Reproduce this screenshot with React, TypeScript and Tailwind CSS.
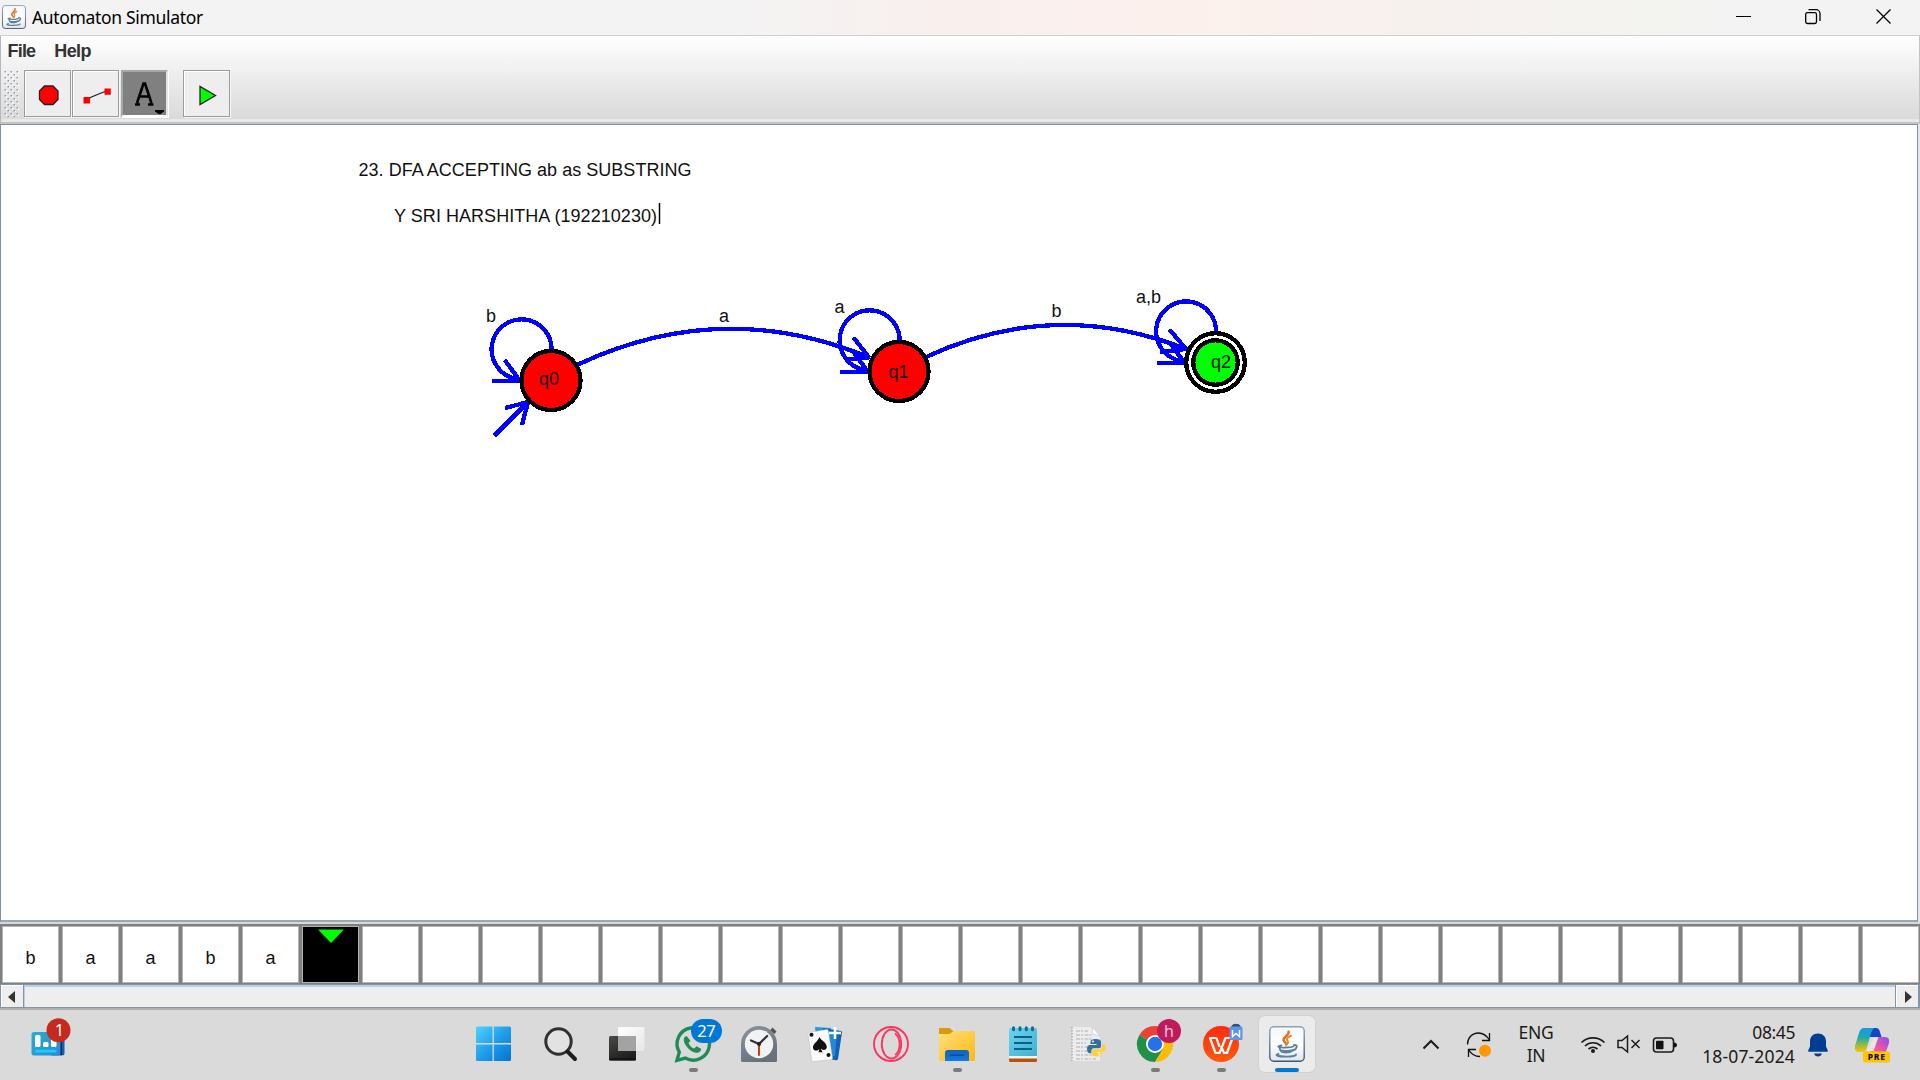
import type { ReactNode } from "react";

const SANS = "font-['Liberation_Sans',Arial,sans-serif]";
const UI = "font-['Noto_Sans','Open_Sans',sans-serif]";

function JavaCup() {
  return (
    <svg viewBox="0 0 36 36" className="size-full">
      <defs>
        <linearGradient id="javaBg" x1="0" y1="0" x2="0" y2="1">
          <stop offset="0" stopColor="#f4f7fa" />
          <stop offset="0.5" stopColor="#ffffff" />
          <stop offset="1" stopColor="#dfe6ee" />
        </linearGradient>
        <linearGradient id="javaEdge" x1="0" y1="0" x2="0" y2="1">
          <stop offset="0" stopColor="#8fa3b5" />
          <stop offset="1" stopColor="#41576e" />
        </linearGradient>
      </defs>
      <rect x="0.8" y="0.8" width="34.4" height="34.4" rx="4" fill="url(#javaBg)" stroke="url(#javaEdge)" strokeWidth="1.4" />
      <g fill="none" strokeLinecap="round">
        <path d="M19.500 5.500c1.500 4-5.500 5.500-5 8.500.3 2 3 2.500 2.500 4.500" stroke="#e0701e" strokeWidth="2.400" />
        <path d="M22 9.800c-3.500 1.500-5 3-3.500 5 1 1.500.8 2.200-.7 3.700" stroke="#e8862e" strokeWidth="2" />
        <path d="M12.500 19.500c-6 1-3 2.200 4.500 2 3.500 0 6-.4 7.500-1" stroke="#5b7f9f" strokeWidth="1.800" />
        <path d="M10.500 21.500c1 5 2.500 5 6 5s6-.5 7-2.500" stroke="#5b7f9f" strokeWidth="1.800" />
        <path d="M25 19c4.500-.5 3 4-1 5.500" stroke="#5b7f9f" strokeWidth="1.900" />
        <path d="M13 24.500c3 .8 6 .7 9 0M9.500 28c-5 1.200 0 2.600 8 2.600 6 0 10-.9 9.500-2.200" stroke="#5b7f9f" strokeWidth="1.900" />
      </g>
    </svg>
  );
}

function TitleBar() {
  return (
    <header className="flex h-[36px] items-center border-b border-[#cfcfcf] bg-[linear-gradient(90deg,#f3f3f3_0%,#f3f3f3_38%,#f9efed_50%,#fbf0ec_62%,#f6f1ee_76%,#f3f3ef_86%,#f3f3f3_90%)] pl-[2px]">
      <div className="mt-[-2px] size-[24px]">
        <JavaCup />
      </div>
      <h1 className={`${UI} ml-[6px] mt-[-1.500px] text-[17.500px] leading-[24px] tracking-[-0.330px] text-black`}>Automaton Simulator</h1>
      <div className="ml-auto flex h-full">
        <svg className="h-[35px] w-[69px]" viewBox="0 0 69 35">
          <path d="M27 16.500h15" stroke="#000" strokeWidth="1" />
        </svg>
        <svg className="h-[35px] w-[69px]" viewBox="0 0 69 35" fill="none" stroke="#000" strokeWidth="1.300">
          <rect x="27.700" y="12.700" width="10.800" height="10.800" rx="1.800" />
          <path d="M30.500 9.700h7.500a4 4 0 0 1 4 4v7.300" />
        </svg>
        <svg className="h-[35px] w-[73px]" viewBox="0 0 73 35">
          <path d="M29.500 9.500l14 14m0-14l-14 14" stroke="#000" strokeWidth="1.300" />
        </svg>
      </div>
    </header>
  );
}

function ToolButton({ children, active }: { children: ReactNode; active?: boolean }) {
  return (
    <button
      className={
        active
          ? "h-[47px] w-[47px] border-2 border-b-white border-l-[#a8a8a8] border-r-[#e4e4e4] border-t-[#a8a8a8] bg-[#808080] shadow-[1px_1px_0_#fff]"
          : "h-[47px] w-[47px] border border-[#9c9c9c] bg-[#eee] shadow-[1px_1px_0_#f6f6f6,inset_1px_1px_0_#fff]"
      }
    >
      {children}
    </button>
  );
}

function MenuAndTools() {
  return (
    <div className="flex h-[88px] flex-col border-b-2 border-l border-r border-b-[#c4c4c4] border-l-[#b8b8b8] border-r-[#c4c4c4] bg-[linear-gradient(180deg,#ffffff_0%,#f4f4f4_28%,#dadada_96%,#e8e8e8_97%)]">
      <nav className={`${SANS} flex h-[34px] items-center gap-[19px] pb-[1px] pl-[6.500px] text-[18px] font-bold text-[#333]`}>
        <span className="tracking-[-0.800px]">File</span>
        <span className="tracking-[-0.600px]">Help</span>
      </nav>
      <div className="flex pl-[3px] pt-[2px]">
        <svg className="h-[47px] w-[15px]">
          <defs>
            <pattern id="grip" width="6" height="6" patternUnits="userSpaceOnUse">
              <rect width="1.500" height="1.500" x="0.500" y="1" fill="#8d9bab" />
              <rect width="1.500" height="1.500" x="1.800" y="2.300" fill="#fff" />
              <rect width="1.500" height="1.500" x="3.500" y="4" fill="#8d9bab" />
              <rect width="1" height="1" x="5" y="5" fill="#fff" />
            </pattern>
          </defs>
          <rect width="15" height="47" fill="url(#grip)" />
        </svg>
        <div className="ml-[5px] flex gap-[1px]">
          <ToolButton>
            <svg viewBox="0 0 45 45" className="size-[45px]">
              <path d="M19.500 15h8.500l5 5v8.500l-5 5h-8.500l-5-5V20z" fill="#f00" stroke="#222" strokeWidth="1.300" />
            </svg>
          </ToolButton>
          <ToolButton>
            <svg viewBox="0 0 45 45" className="size-[45px]">
              <path d="M13.500 29l5-3 6-2.500 10-4" stroke="#222" strokeWidth="1.300" fill="none" />
              <path d="M10.500 26h6.500v6.500h-6.500zM31.500 17.500h6.300v6.300h-6.300z" fill="#f00" />
            </svg>
          </ToolButton>
          <div className="pl-[1px]">
            <ToolButton active>
              <svg viewBox="0 0 43 43" className="size-[43px]">
                <path d="M12 32.500h5M25 32.500h5.500M14.500 32.500v-3l6-18h1.500l6 18v3M17 24.500h9" fill="none" stroke="#000" strokeWidth="2.600" />
                <path d="M32 38h9v1.500l-3.500 2.500h-2l-3.500-2.500z" fill="#000" />
              </svg>
            </ToolButton>
          </div>
        </div>
        <div className="ml-[15px]">
          <ToolButton>
            <svg viewBox="0 0 45 45" className="size-[45px]">
              <path d="M16 15.500v18l15.500-9z" fill="#0f0" stroke="#222" strokeWidth="1.300" />
            </svg>
          </ToolButton>
        </div>
      </div>
    </div>
  );
}

function Loop({ x, y }: { x: number; y: number }) {
  return (
    <g transform={`translate(${x} ${y})`}>
      <path d="M0.500-28A30 30 0 1 0-34-1L-30 0.500" />
      <path d="M-59 0.800h28l-15.500-21" strokeLinejoin="bevel" />
    </g>
  );
}

/* Drawing area: the automaton graph and its two notes. */
function Canvas() {
  return (
    <main className="h-[798px] bg-[#e4e8ec] pr-[2px]">
      <div className="h-full border border-b-2 border-[#7f91a3] border-b-[#9aa8b6] bg-white">
        <svg viewBox="1 125 1916 795" className={`block h-[795px] w-[1916px] ${SANS}`} fontSize="18" fill="#111">
          <text x="358.500" y="176" textLength="333" lengthAdjust="spacing">23. DFA ACCEPTING ab as SUBSTRING</text>
          <text x="394" y="222" textLength="263" lengthAdjust="spacing">Y SRI HARSHITHA (192210230)</text>
          <path d="M659.500 203v21" stroke="#000" strokeWidth="1.500" />
          <g fill="none" stroke="#00f" strokeWidth="4.300" shapeRendering="crispEdges">
            <path d="M578 364.500Q722 297 868 357" />
            <path d="M845 360l24-2.500-15.500-20" strokeLinejoin="bevel" />
            <path d="M925 357.500Q1054 297 1186 349" />
            <path d="M1160 352l26-3-16.500-19.500" strokeLinejoin="bevel" />
            <Loop x={551} y={380} />
            <Loop x={899} y={371} />
            <Loop x={1215.500} y={362} />
            <path d="M494 436l34-34M505 408l23-6-6 23" />
          </g>
          <g stroke="#000" strokeWidth="4.300" shapeRendering="crispEdges">
            <circle cx="551" cy="380.500" r="29.500" fill="#f00" />
            <circle cx="899" cy="371.500" r="29.500" fill="#f00" />
            <circle cx="1215.500" cy="362.500" r="29.300" fill="#fff" />
            <circle cx="1215.500" cy="362.500" r="22.200" fill="#0f0" />
          </g>
          <text x="539" y="385">q0</text>
          <text x="888.500" y="378">q1</text>
          <text x="1211" y="368">q2</text>
          <text x="486" y="321.500">b</text>
          <text x="719" y="321.500">a</text>
          <text x="834.500" y="312.500">a</text>
          <text x="1051.500" y="316.500">b</text>
          <text x="1136" y="303">a,b</text>
        </svg>
      </div>
    </main>
  );
}

const tape = ["b", "a", "a", "b", "a"];

function Tape() {
  return (
    <section className="h-[62px] overflow-hidden border-t-2 border-[#d8d8d8] bg-[#808080] pl-[2px] pt-[2px]">
      <div className="flex w-[1980px] gap-[3px]">
        {Array.from({ length: 32 }, (_, i) => (
          <div
            key={i}
            className={`${SANS} flex h-[57px] w-[57px] justify-center border border-[#b4b4b4] pt-[17px] text-[18px] leading-[28px] text-[#111] ${i === 5 ? "bg-black" : "bg-white"}`}
          >
            {i === 5 ? (
              <svg className="mt-[-15px] h-[15px] w-[26px]" viewBox="0 0 26 15">
                <path d="M0 0.500h26L13 14z" fill="#0f0" />
              </svg>
            ) : (
              tape[i]
            )}
          </div>
        ))}
      </div>
    </section>
  );
}

function ScrollBar() {
  return (
    <div className="flex h-[26px] border-b-2 border-t border-b-[#b0b0b0] border-t-[#8395a7] bg-[#8395a7] pl-[1px]">
      <div className="flex h-[22px] w-[22px] items-center border-l border-t border-white bg-[#eee]">
        <svg className="ml-[6px] h-[12px] w-[7px]" viewBox="0 0 7 12"><path d="M7 0v12L0 6z" fill="#333" /></svg>
      </div>
      <div className="ml-[1px] h-[22px] flex-1 border-l border-t-2 border-[#b8cfe5] bg-[#eee]" />
      <div className="ml-[1px] mr-[2px] flex h-[22px] w-[22px] items-center border-l border-t border-white bg-[#eee]">
        <svg className="ml-[8px] h-[12px] w-[7px]" viewBox="0 0 7 12"><path d="M0 0v12L7 6z" fill="#333" /></svg>
      </div>
    </div>
  );
}

function TaskIcon({ children, running, active }: { children: ReactNode; running?: boolean; active?: boolean }) {
  return (
    <div className="flex h-[70px] w-[66px] justify-center pt-[6px]">
      <div className={`flex h-[56px] w-[56px] flex-col items-center rounded-[6px] pt-[10px] ${active ? "bg-[#ebebeb] shadow-[0_0_0_1px_#d2d2d2]" : ""}`}>
        <div className="size-[36px]">{children}</div>
        {running && <div className="mt-[6px] h-[5px] w-[9px] rounded-full bg-[#7b7b7b]" />}
        {active && <div className="mt-[6px] h-[5px] w-[24px] rounded-full bg-[#0078d7]" />}
      </div>
    </div>
  );
}

function Pic({ children }: { children: ReactNode }) {
  return <svg viewBox="0 0 36 36" className="size-[36px] overflow-visible">{children}</svg>;
}

function Taskbar() {
  return (
    <footer className={`${UI} flex h-[70px] bg-[#dadada] text-[#1b1b1b]`}>
      <svg className="h-[70px] w-[462px] overflow-visible" viewBox="0 0 462 70">
        <defs>
          <linearGradient id="wid" x1="0" x2="1" y1="0" y2="1">
            <stop offset="0" stopColor="#25b0cb" />
            <stop offset="1" stopColor="#2f86dc" />
          </linearGradient>
        </defs>
        <rect x="50" y="22" width="14.500" height="23.500" rx="2.500" fill="#1560b0" />
        <path d="M60 28h2v17h-2z" fill="#0b2a58" />
        <rect x="31.500" y="22" width="29" height="23.500" rx="2.500" fill="url(#wid)" />
        <g fill="#fff">
          <rect x="35" y="25" width="5.500" height="12" rx="1.500" />
          <rect x="43" y="32" width="5.500" height="5" rx="1.500" />
          <rect x="51" y="25" width="5.500" height="12" rx="1.500" />
        </g>
        <rect x="35" y="39.800" width="21.500" height="2.800" rx="1.400" fill="#11d3f5" />
        <circle cx="58.500" cy="20.300" r="12" fill="#c42b1c" />
        <text x="59.500" y="26.200" fontSize="16.500" textAnchor="middle" fill="#fff">1</text>
      </svg>

      <div className="flex">
        <TaskIcon>
          <Pic>
            <defs>
              <linearGradient id="win" gradientUnits="userSpaceOnUse" x1="0" y1="0" x2="36" y2="36">
                <stop offset="0" stopColor="#4cd4ff" />
                <stop offset="0.500" stopColor="#1f9be8" />
                <stop offset="1" stopColor="#0070d2" />
              </linearGradient>
            </defs>
            <path d="M0 0.500h15.500v16.500H-1V1.500Q-1 .5 0 .5zM16.800 .5h15.700q1.500 0 1.500 1.500v15H16.800zM-1 18.500h16.500v16.500H0Q-1 35 -1 34zM16.800 18.500H34v15q0 1.500-1.500 1.500H16.800z" fill="url(#win)" />
          </Pic>
        </TaskIcon>
        <TaskIcon>
          <Pic>
            <circle cx="15.500" cy="15.500" r="12.700" fill="#e2e2e2" stroke="#303030" strokeWidth="3" />
            <path d="M24.500 25.500l7.500 7.500" stroke="#1d1d1d" strokeWidth="4" strokeLinecap="round" />
          </Pic>
        </TaskIcon>
        <TaskIcon>
          <Pic>
            <defs>
              <linearGradient id="tvb" x1="0" x2="0.500" y1="0" y2="1"><stop offset="0" stopColor="#4a4a48" /><stop offset="1" stopColor="#1e1e1e" /></linearGradient>
              <linearGradient id="tvw" x1="0" x2="1" y1="0" y2="1"><stop offset="0" stopColor="#fff" /><stop offset="1" stopColor="#e6e6e6" /></linearGradient>
            </defs>
            <rect x="0" y="10" width="27" height="24.800" rx="1.500" fill="url(#tvb)" />
            <rect x="9" y="1" width="26.500" height="24" rx="1.500" fill="url(#tvw)" />
            <path d="M9 10h18v15H10.500q-1.500 0-1.500-1.500z" fill="#a3a3a3" />
            <path d="M.3 33h26.500" stroke="#000" strokeWidth="0.800" />
          </Pic>
        </TaskIcon>
        <TaskIcon running>
          <Pic>
            <path d="M2 34.300l2.300-8.200A16.200 16.200 0 1 1 10.300 32z" fill="none" stroke="#1f8b57" strokeWidth="3.400" />
            <path d="M12 10.500c-1.500-1-3.500 1-3.200 4 .5 5 7.500 12.500 13 12.300 2.500 0 4.500-2 4.300-4l-4.500-2.500-2.500 2.300c-2.500-1-4.500-3-5.600-5.600l2-2.300z" fill="#1f8b57" />
            <rect x="16" y="-7" width="31" height="24" rx="12" fill="#0078d7" />
            <text x="31.300" y="11" fontSize="16.500" textAnchor="middle" letterSpacing="-0.500" fill="#fff">27</text>
          </Pic>
        </TaskIcon>
        <TaskIcon>
          <Pic>
            <defs>
              <linearGradient id="clk" x1="0" x2="0.500" y1="0" y2="1"><stop offset="0" stopColor="#8c959e" /><stop offset="1" stopColor="#66717c" /></linearGradient>
            </defs>
            <path d="M29 4.500l2.500-3 4 4-2 2.500z" fill="#555" />
            <path d="M0 18a18 18 0 0 1 36 0v16.500q0 1.500-1.500 1.500h-33Q0 36 0 34.500z" fill="url(#clk)" />
            <circle cx="18" cy="18" r="14.200" fill="#f1f2f3" />
            <path d="M10 14.500l8 3.500 8.200-8" fill="none" stroke="#333" strokeWidth="2.200" strokeLinecap="round" />
            <path d="M18 18v11.800" stroke="#d83b01" strokeWidth="2" />
            <circle cx="18" cy="18" r="2" fill="#222" />
          </Pic>
        </TaskIcon>
        <TaskIcon>
          <Pic>
            <path d="M8 1l16 1-3 30-10-1z" fill="#1b9be5" />
            <path d="M16 2l18 3q1.300.300 1 1.500L31 33q-.3 1.500-2 1.300L15 32z" fill="#0f62b4" />
            <path d="M20 5l10 1-2 24-8 1z" fill="#2587d8" />
            <path d="M2 6.500L19.500 3.500q1.500-.3 1.800 1.200L25.500 32q.2 1.500-1.300 1.700L6.500 35.500q-1.500.2-1.800-1.300L1 8q-.2-1.300 1-1.500z" fill="#fafafa" stroke="#bbb" strokeWidth="0.500" />
            <path d="M12.300 11c2 4 7 5 7.500 9.500.3 3.500-3.800 4.500-6 2l1.700 3.800h-4l1-3.600c-1.800 3-6.200 2.300-6.500-1-.4-4 5-6 6.300-10.700z" fill="#111" />
            <circle cx="4.500" cy="8.800" r="2" fill="#111" />
            <circle cx="21.500" cy="29" r="2" fill="#111" />
            <path d="M28 1v12M22 7h12" stroke="#fff" strokeWidth="2.500" />
          </Pic>
        </TaskIcon>
        <TaskIcon>
          <Pic>
            <g fill="none" stroke="#fb3660">
              <circle cx="18" cy="18" r="17" strokeWidth="1.900" />
              <ellipse cx="18.500" cy="18" rx="9.700" ry="14.500" strokeWidth="1.900" />
              <path d="M22 7.500c6 4 6 17.500 0 21.500" strokeWidth="1.700" />
            </g>
          </Pic>
        </TaskIcon>
        <TaskIcon running>
          <Pic>
            <defs>
              <linearGradient id="fld" x1="0" x2="1" y1="0" y2="1"><stop offset="0" stopColor="#ffe07a" /><stop offset="1" stopColor="#fdb913" /></linearGradient>
              <linearGradient id="fldb" x1="0" x2="0" y1="0" y2="1"><stop offset="0" stopColor="#0a66c2" /><stop offset="1" stopColor="#1679dc" /></linearGradient>
            </defs>
            <path d="M0 3q0-1 1-1h9.500l4 3.300L11 8.500H0z" fill="#dc9a06" />
            <path d="M0 8h10.500l4-3H35q1 0 1 1v28q0 1-1 1H1q-1 0-1-1z" fill="url(#fld)" />
            <path d="M6 35v-8q0-3 3-3h18q3 0 3 3v8z" fill="url(#fldb)" />
            <path d="M11 29.200h14" stroke="#0a4a92" strokeWidth="1.500" />
          </Pic>
        </TaskIcon>
        <TaskIcon>
          <Pic>
            <defs>
              <linearGradient id="ntp" x1="0" x2="1" y1="0" y2="1"><stop offset="0" stopColor="#6cd4ee" /><stop offset="1" stopColor="#3fb0d3" /></linearGradient>
            </defs>
            <path d="M4 30h28v3H4z" fill="#f4f4f4" />
            <path d="M4 32.500h28v2.300q0 1.200-1.500 1.200h-25Q4 36 4 34.800z" fill="#b5530c" />
            <path d="M4 3.500Q4 2 5.500 2h25Q32 2 32 3.500V30H4z" fill="url(#ntp)" />
            <path d="M9 11h18M9 17h18M9 23h18" stroke="#0b5f85" strokeWidth="2" />
            <path d="M8.500 1.700v2M15 1.700v2M21.300 1.700v2M27.500 1.700v2" stroke="#0b6d91" strokeWidth="3" strokeLinecap="round" />
          </Pic>
        </TaskIcon>
        <TaskIcon>
          <Pic>
            <path d="M1 1h20l8 9v25H1z" fill="#ececec" />
            <path d="M1 1v34" stroke="#aaa" strokeWidth="1.500" strokeDasharray="1.500 1.500" />
            <path d="M5 5h12M5 9h16M5 13h17M5 17h10M5 21h14M5 25h11M5 29h16M5 33h20" stroke="#c4c4c4" strokeWidth="1.300" strokeDasharray="4 1 2 1.500" />
            <path d="M21 1l8 9-7-2z" fill="#fff" stroke="#bbb" strokeWidth="0.500" />
            <path d="M24.500 13q-5 0-5 3v2h6v1H19q-3 0-3 4t2.500 4.200h2v-2.500q0-2.500 2.500-2.500h5q2 0 2-2.200v-4q0-3-5.500-3z" fill="#34709f" />
            <path d="M26 30.500q-5.500 0-5.500-2.500v-2.500q0-2.200 2.200-2.200h5.800q2.500 0 2.500-2.300v-3h1q2.500 0 2.500 3.700t-3 4.300h-5.500v1h5V28q0 2.500-5 2.500z" fill="#ffd03b" />
            <circle cx="22" cy="15.500" r="0.900" fill="#fff" />
            <circle cx="28.500" cy="28.500" r="0.900" fill="#fff" />
          </Pic>
        </TaskIcon>
        <TaskIcon running>
          <Pic>
            <path d="M18 18L2.400 9A18 18 0 0 1 33.600 9z" fill="#ea4335" />
            <path d="M18 18L2.400 9A18 18 0 0 0 18 36l8-13z" fill="#1f9148" />
            <path d="M18 9h15.600A18 18 0 0 1 18 36l8-13z" fill="#fbbc05" />
            <circle cx="18" cy="18" r="9" fill="#fff" />
            <circle cx="18" cy="18" r="7.200" fill="#2572e6" />
            <circle cx="32" cy="5" r="12" fill="#bf1a5c" />
            <text x="32" y="11" fontSize="16" textAnchor="middle" fill="#f3c6d8">h</text>
          </Pic>
        </TaskIcon>
        <TaskIcon running>
          <Pic>
            <defs>
              <linearGradient id="wps" x1="0" x2="0" y1="0" y2="1"><stop offset="0" stopColor="#fc2a12" /><stop offset="1" stopColor="#ff5a0a" /></linearGradient>
            </defs>
            <circle cx="18" cy="18" r="18" fill="url(#wps)" />
            <path d="M13.500 12H7l5.500 15h4l6-15h7l-5.500 15h-3L18 20M13.500 12l3 9" fill="none" stroke="#fff" strokeWidth="2.200" strokeLinejoin="round" />
            <path d="M28 1q2-4 6-3 4 0 4 5z" fill="#34506e" />
            <rect x="26.500" y="0.500" width="13" height="13.500" rx="1.500" fill="#5b94ee" />
            <path d="M29.500 4v6.500l3.500-3 3.500 3V4" fill="none" stroke="#fff" strokeWidth="1.500" />
          </Pic>
        </TaskIcon>
        <TaskIcon active>
          <JavaCup />
        </TaskIcon>
      </div>

      <div className="ml-auto flex w-[510px] items-center">
        <svg className="ml-[12px] h-[12px] w-[18px]" viewBox="0 0 18 12">
          <path d="M1.500 9.500L9 2l7.500 7.500" fill="none" stroke="#1b1b1b" strokeWidth="2" />
        </svg>
        <svg className="ml-[26px] h-[28px] w-[26px]" viewBox="0 0 26 28" fill="none" stroke="#111" strokeWidth="1.300">
          <path d="M1.500 13.500C1.500 7 6 2 12.500 2c5 0 8 2.500 11 7M23.500 2v7.500H16" />
          <path d="M14 25.500C8.500 25.500 5 23 2.500 18.500M2.500 26v-7.500H10" />
          <circle cx="19" cy="19.800" r="6" fill="#ff9800" stroke="none" />
        </svg>
        <div className="ml-[23px] mt-[-2px] w-[42px] text-center text-[17.500px] leading-[23px] tracking-[-0.300px]">ENG<br />IN</div>
        <svg className="ml-[23px] mt-[-2px] h-[20px] w-[26px]" viewBox="0 0 26 20" fill="none" stroke="#1b1b1b" strokeWidth="1.700">
          <path d="M1.500 8.500a16.500 16.500 0 0 1 23 0M5 12a11.500 11.500 0 0 1 16 0M8.500 15a7 7 0 0 1 9 0" />
          <circle cx="13" cy="17" r="2" fill="#1b1b1b" stroke="none" />
        </svg>
        <svg className="ml-[11px] mt-[-2px] h-[20px] w-[24px]" viewBox="0 0 24 20" fill="none" stroke="#1b1b1b" strokeWidth="1.500">
          <path d="M1 6.500h4L10.500 2v16L5 13.500H1zM14.500 6l8 8m0-8l-8 8" />
        </svg>
        <svg className="ml-[11px] mt-[-1px] h-[18px] w-[26px]" viewBox="0 0 26 18">
          <rect x="1.500" y="2" width="20" height="14" rx="3" fill="none" stroke="#1b1b1b" strokeWidth="1.600" />
          <rect x="4" y="4.800" width="7.500" height="8.500" rx="0.800" fill="#111" />
          <path d="M22 6.500q3 .5 3 2.500t-3 2.500z" fill="#111" />
        </svg>
        <div className="mt-[-3px] w-[117px] text-right text-[17.500px] leading-[24px] tracking-[0.150px]"><span className="tracking-[-0.400px]">08:45</span><br />18-07-2024</div>
        <svg className="ml-[13px] mt-[-1px] h-[24px] w-[20px]" viewBox="0 0 20 24" fill="#003e92">
          <path d="M10 .5c4.800 0 8 3 8 8v5l1.800 4q.4 1.200-.8 1.200H1q-1.200 0-.8-1.200L2 13.500v-5c0-5 3.200-8 8-8zM6 20.500h8q-1 3-4 3t-4-3z" />
        </svg>
        <svg className="ml-[26px] h-[38px] w-[37px]" viewBox="0 0 37 38">
          <defs>
            <linearGradient id="cpl" x1="0" x2="0" y1="0" y2="1"><stop offset="0" stopColor="#1699e6" /><stop offset="0.400" stopColor="#20a8b0" /><stop offset="0.750" stopColor="#a3bf2e" /><stop offset="1" stopColor="#ffc107" /></linearGradient>
            <linearGradient id="cpr" x1="1" x2="0" y1="0" y2="1"><stop offset="0" stopColor="#8c4cf5" /><stop offset="0.550" stopColor="#f0599a" /><stop offset="1" stopColor="#ff8a4c" /></linearGradient>
          </defs>
          <path d="M10 2h12q3 0 4 4l1.500 5H16z" fill="#1146c8" />
          <path d="M10 2h11q-3 1-4.500 7l-3.500 12q-1 5-4 5H5q-5 0-4-6L5 7q1.500-5 5-5z" fill="url(#cpl)" />
          <path d="M21 11h10q5 0 4 6l-3.500 10Q30 31 26 31H13q2.500-1 4-6l3-10q.5-3 1-4z" fill="url(#cpr)" />
          <path d="M20 11h4.500L19.500 25h-6.500z" fill="#e9e4e6" />
          <rect x="9" y="25.500" width="27" height="11" rx="2" fill="#ffc400" />
          <text x="22.800" y="34" fontSize="8.500" fontWeight="800" textAnchor="middle" letterSpacing="0.800" fill="#111">PRE</text>
        </svg>
      </div>
    </footer>
  );
}

export default function App() {
  return (
    <div className="flex h-[1080px] w-[1920px] flex-col overflow-hidden bg-white">
      <TitleBar />
      <MenuAndTools />
      <Canvas />
      <Tape />
      <ScrollBar />
      <Taskbar />
    </div>
  );
}
